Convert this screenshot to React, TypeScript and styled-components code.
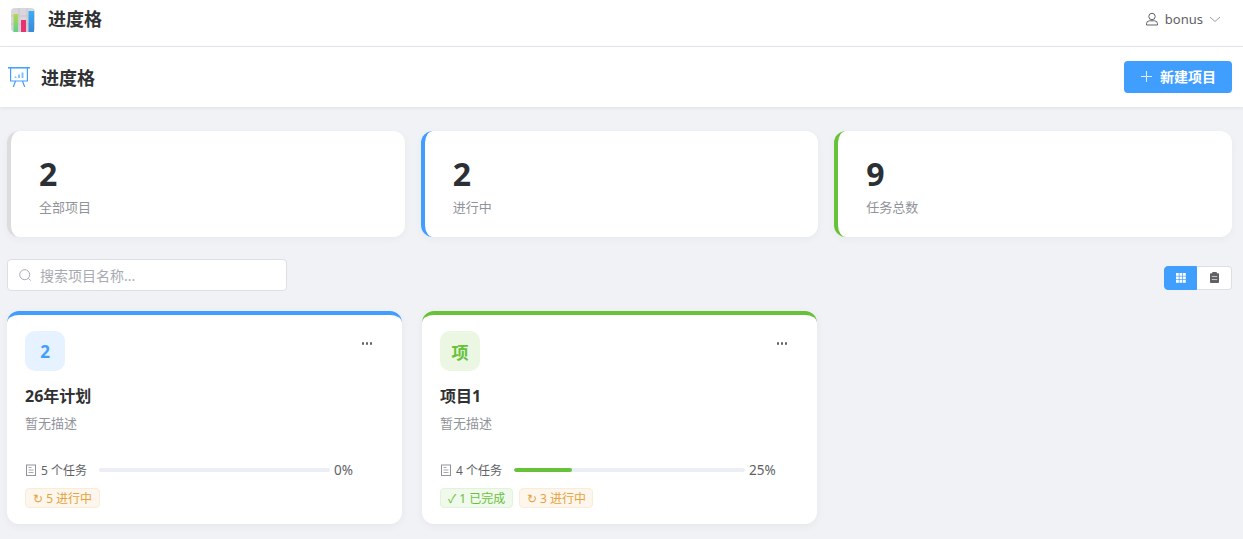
import styled, { createGlobalStyle } from 'styled-components'

const GlobalStyle = createGlobalStyle`
  html, body { margin: 0; padding: 0; height: 100%; overflow: hidden; background: #f0f2f6; }
  body { font-family: "Noto Sans", "Noto Sans CJK SC", sans-serif; color: #303133; }
  * { box-sizing: border-box; }
`

const TopBar = styled.header`
  height: 47px;
  background: #fff;
  border-bottom: 1px solid #e4e7ed;
  display: flex;
  align-items: center;
  justify-content: space-between;
  padding: 0 22px 8px 11px;
`

const Brand = styled.div`
  display: flex;
  align-items: center;
  gap: 13px;
  font-size: 18px;
  font-weight: 700;
  color: #303133;
`

const BrandLogo = styled.span`
  display: flex;
  margin-top: 2px;
`

const BrandText = styled.span`
  margin-bottom: 2px;
`

const UserMenu = styled.div`
  display: flex;
  align-items: center;
  font-size: 13px;
  color: #606266;
  gap: 6px;
`

const PageHeader = styled.div`
  height: 60px;
  background: #fff;
  box-shadow: 0 1px 4px rgba(0, 0, 0, 0.08);
  display: flex;
  align-items: center;
  justify-content: space-between;
  padding: 0 11px 0 8px;
`

const PageTitle = styled.h1`
  display: flex;
  align-items: center;
  gap: 11px;
  margin: 0;
  font-size: 18px;
  font-weight: 700;
  color: #303133;
`

const PrimaryButton = styled.button`
  width: 108px;
  height: 32px;
  border: 0;
  border-radius: 4px;
  padding: 0 0 2px;
  background: #409eff;
  color: #fff;
  font: 700 14px "Noto Sans", "Noto Sans CJK SC", sans-serif;
  display: flex;
  align-items: center;
  justify-content: center;
  gap: 7px;
`

const Content = styled.main`
  padding: 24px 11px 0 7px;
`

const StatsRow = styled.section`
  display: grid;
  grid-template-columns: repeat(3, 1fr);
  gap: 16px;
  margin-bottom: 24px;
`

const StatCard = styled.div<{ $accent: string }>`
  height: 106px;
  background: #fff;
  border-left: 4px solid ${(p) => p.$accent};
  border-radius: 12px;
  box-shadow: 0 2px 8px rgba(0, 0, 0, 0.04);
  padding: 23px 28px;
`

const StatValue = styled.div`
  font-size: 32px;
  line-height: 40px;
  font-weight: 700;
  color: #2b2f36;
`

const StatLabel = styled.div`
  margin-top: 4px;
  font-size: 13px;
  line-height: 18px;
  color: #909399;
`

const Toolbar = styled.div`
  display: flex;
  align-items: center;
  justify-content: space-between;
  margin-bottom: 20px;
  margin-top: -2px;
`

const SearchBox = styled.div`
  width: 280px;
  height: 32px;
  background: #fff;
  border: 1px solid #dcdfe6;
  border-radius: 4px;
  display: flex;
  align-items: center;
  gap: 9px;
  padding: 0 11px;
  font-size: 14px;
  color: #a8abb2;
`

const ViewSwitch = styled.div`
  display: flex;
  margin-top: 5px;
  height: 24px;
`

const ViewButton = styled.div<{ $active?: boolean }>`
  width: ${(p) => (p.$active ? 33 : 35)}px;
  display: flex;
  align-items: center;
  justify-content: center;
  background: ${(p) => (p.$active ? '#409eff' : '#fff')};
  border: 1px solid ${(p) => (p.$active ? '#409eff' : '#dcdfe6')};
  border-left-width: ${(p) => (p.$active ? 1 : 0)}px;
  border-radius: ${(p) => (p.$active ? '4px 0 0 4px' : '0 4px 4px 0')};
`

const ProjectGrid = styled.section`
  display: grid;
  grid-template-columns: repeat(3, 395px);
  gap: 20px;
`

const ProjectCard = styled.article<{ $accent: string }>`
  position: relative;
  height: 213px;
  background: #fff;
  border-top: 4px solid ${(p) => p.$accent};
  border-radius: 12px;
  box-shadow: 0 2px 8px rgba(0, 0, 0, 0.05);
  padding: 16px 18px 0;
`

const CardTop = styled.div`
  display: flex;
  justify-content: space-between;
  align-items: flex-start;
`

const Avatar = styled.div<{ $bg: string; $fg: string }>`
  width: 40px;
  height: 40px;
  border-radius: 10px;
  background: ${(p) => p.$bg};
  color: ${(p) => p.$fg};
  display: flex;
  align-items: center;
  justify-content: center;
  font-size: 17px;
  font-weight: 700;
`

const MoreButton = styled.div`
  display: flex;
  gap: 1.5px;
  margin: 11px 12px 0 0;
`

const Dot = styled.span`
  width: 2.5px;
  height: 2.5px;
  border-radius: 50%;
  background: #606266;
`

const CardName = styled.h3`
  margin: 14px 0 0;
  font-size: 16px;
  line-height: 22px;
  font-weight: 700;
  color: #303133;
`

const CardDesc = styled.p`
  margin: 6px 0 0;
  font-size: 13px;
  line-height: 20px;
  color: #909399;
`

const TaskRow = styled.div`
  display: flex;
  align-items: center;
  margin-top: 28px;
  height: 18px;
  font-size: 12px;
  color: #606266;
`

const TaskCount = styled.span`
  display: flex;
  align-items: center;
  gap: 4px;
  width: 74px;
  white-space: nowrap;
`

const ProgressTrack = styled.div`
  width: 231px;
  height: 4px;
  border-radius: 2px;
  background: #ebeef5;
  overflow: hidden;
`

const ProgressFill = styled.div`
  height: 100%;
  border-radius: 2px;
  background: #67c23a;
`

const Percent = styled.span`
  margin-left: 4px;
  font-size: 13.5px;
`

const Tags = styled.div`
  display: flex;
  gap: 6px;
  margin-top: 9px;
`

const Tag = styled.span<{ $type: 'success' | 'warning' }>`
  height: 20px;
  display: inline-flex;
  align-items: center;
  padding: 0 6.5px 0 7px;
  border-radius: 4px;
  font-size: 12px;
  white-space: nowrap;
  background: ${(p) => (p.$type === 'success' ? '#f0f9eb' : '#fdf6ec')};
  border: 1px solid ${(p) => (p.$type === 'success' ? '#e1f3d8' : '#faecd8')};
  color: ${(p) => (p.$type === 'success' ? '#67c23a' : '#e6a23c')};
`

function LogoIcon() {
  return (
    <svg width="24" height="24" viewBox="0 0 24 24">
      <defs>
        <linearGradient id="lg" x1="0" y1="0" x2="0" y2="1">
          <stop offset="0" stopColor="#b5d84a" />
          <stop offset="1" stopColor="#5fd08a" />
        </linearGradient>
        <linearGradient id="lb" x1="0" y1="0" x2="0" y2="1">
          <stop offset="0" stopColor="#35b0f5" />
          <stop offset="1" stopColor="#3f86d8" />
        </linearGradient>
      </defs>
      <rect width="24" height="24" rx="4" fill="#d9d6dc" />
      <path d="M0 8h24M0 16h24M8 0v24M16 0v24" stroke="#c6c3ca" strokeWidth="0.8" />
      <rect x="2.5" y="6" width="4.5" height="18" fill="url(#lg)" />
      <rect x="10" y="12" width="5" height="12" fill="#e8336f" />
      <rect x="17.5" y="3" width="5.5" height="21" fill="url(#lb)" />
    </svg>
  )
}

function BoardIcon() {
  return (
    <svg width="22" height="20" viewBox="0 0 22 20" fill="none" stroke="#409eff" strokeWidth="1.2">
      <path d="M0 0.8h22" strokeWidth="1.5" />
      <path d="M2.6 0.8V14h16.8V0.8" />
      <path d="M7.5 14l-2.2 6M14.5 14l2.2 6" />
      <path d="M7.5 11V9.5M11 11V7.5M14.5 11V5.5" strokeWidth="1.8" strokeOpacity="0.7" />
    </svg>
  )
}

function UserIcon() {
  return (
    <svg width="14" height="14" viewBox="0 0 14 14" fill="none" stroke="#606266" strokeWidth="1">
      <circle cx="7" cy="4.5" r="3.2" />
      <path d="M1.5 13v-1.2a3 3 0 0 1 3-3h5a3 3 0 0 1 3 3V13z" />
    </svg>
  )
}

function ChevronIcon() {
  return (
    <svg width="12" height="12" viewBox="0 0 12 12" fill="none" stroke="#909399" strokeWidth="0.9">
      <path d="M1 4l5 4.5L11 4" />
    </svg>
  )
}

function PlusIcon() {
  return (
    <svg width="13" height="13" viewBox="0 0 13 13" stroke="#fff" strokeOpacity="0.8" strokeWidth="1.1">
      <path d="M6.5 1v11M1 6.5h11" />
    </svg>
  )
}

function SearchIcon() {
  return (
    <svg width="12" height="12" viewBox="0 0 12 12" fill="none" stroke="#a8abb2" strokeWidth="1">
      <circle cx="5.7" cy="5.7" r="5" />
      <path d="M9.3 9.3l2.3 2.3" />
    </svg>
  )
}

function GridIcon() {
  return (
    <svg width="10" height="10" viewBox="0 0 10 10" fill="#fff">
      {[0, 3.5, 7].map((y) =>
        [0, 3.5, 7].map((x) => <rect key={`${x}-${y}`} x={x} y={y} width="2.8" height="2.8" />)
      )}
    </svg>
  )
}

function ClipboardIcon() {
  return (
    <svg width="9" height="11" viewBox="0 0 9 11">
      <rect x="0" y="1.2" width="9" height="9.8" rx="0.8" fill="#606266" />
      <rect x="2.2" y="0" width="4.6" height="2.2" rx="0.4" fill="#606266" />
      <path d="M1.8 4.5h5.4M1.8 7.5h5.4" stroke="#fff" strokeOpacity="0.8" strokeWidth="0.8" />
    </svg>
  )
}

function DocIcon() {
  return (
    <svg width="12" height="12" viewBox="0 0 12 12" fill="none" stroke="#909399" strokeWidth="1">
      <rect x="1.5" y="1" width="9" height="10.5" />
      <path d="M3.5 3.5h3M3.5 6h5M3.5 8.5h5" strokeWidth="0.8" />
    </svg>
  )
}

const stats = [
  { value: 2, label: '全部项目', accent: '#dcdcdc' },
  { value: 2, label: '进行中', accent: '#409eff' },
  { value: 9, label: '任务总数', accent: '#67c23a' },
]

const projects = [
  { name: '26年计划', letter: '2', accent: '#409eff', bg: '#e6f2ff', tasks: 5, percent: 0, done: 0, doing: 5 },
  { name: '项目1', letter: '项', accent: '#67c23a', bg: '#ebf6e3', tasks: 4, percent: 25, done: 1, doing: 3 },
]

export default function App() {
  return (
    <>
      <GlobalStyle />
      <TopBar>
        <Brand>
          <BrandLogo>
            <LogoIcon />
          </BrandLogo>
          <BrandText>进度格</BrandText>
        </Brand>
        <UserMenu>
          <UserIcon />
          bonus
          <ChevronIcon />
        </UserMenu>
      </TopBar>
      <PageHeader>
        <PageTitle>
          <BoardIcon />
          进度格
        </PageTitle>
        <PrimaryButton>
          <PlusIcon />
          新建项目
        </PrimaryButton>
      </PageHeader>
      <Content>
        <StatsRow>
          {stats.map((s) => (
            <StatCard key={s.label} $accent={s.accent}>
              <StatValue>{s.value}</StatValue>
              <StatLabel>{s.label}</StatLabel>
            </StatCard>
          ))}
        </StatsRow>
        <Toolbar>
          <SearchBox>
            <SearchIcon />
            搜索项目名称...
          </SearchBox>
          <ViewSwitch>
            <ViewButton $active>
              <GridIcon />
            </ViewButton>
            <ViewButton>
              <ClipboardIcon />
            </ViewButton>
          </ViewSwitch>
        </Toolbar>
        <ProjectGrid>
          {projects.map((p) => (
            <ProjectCard key={p.name} $accent={p.accent}>
              <CardTop>
                <Avatar $bg={p.bg} $fg={p.accent}>{p.letter}</Avatar>
                <MoreButton>
                  <Dot />
                  <Dot />
                  <Dot />
                </MoreButton>
              </CardTop>
              <CardName>{p.name}</CardName>
              <CardDesc>暂无描述</CardDesc>
              <TaskRow>
                <TaskCount>
                  <DocIcon />
                  {p.tasks} 个任务
                </TaskCount>
                <ProgressTrack>
                  <ProgressFill style={{ width: `${p.percent}%` }} />
                </ProgressTrack>
                <Percent>{p.percent}%</Percent>
              </TaskRow>
              <Tags>
                {p.done > 0 && <Tag $type="success">✓ {p.done} 已完成</Tag>}
                <Tag $type="warning">↻ {p.doing} 进行中</Tag>
              </Tags>
            </ProjectCard>
          ))}
        </ProjectGrid>
      </Content>
    </>
  )
}
